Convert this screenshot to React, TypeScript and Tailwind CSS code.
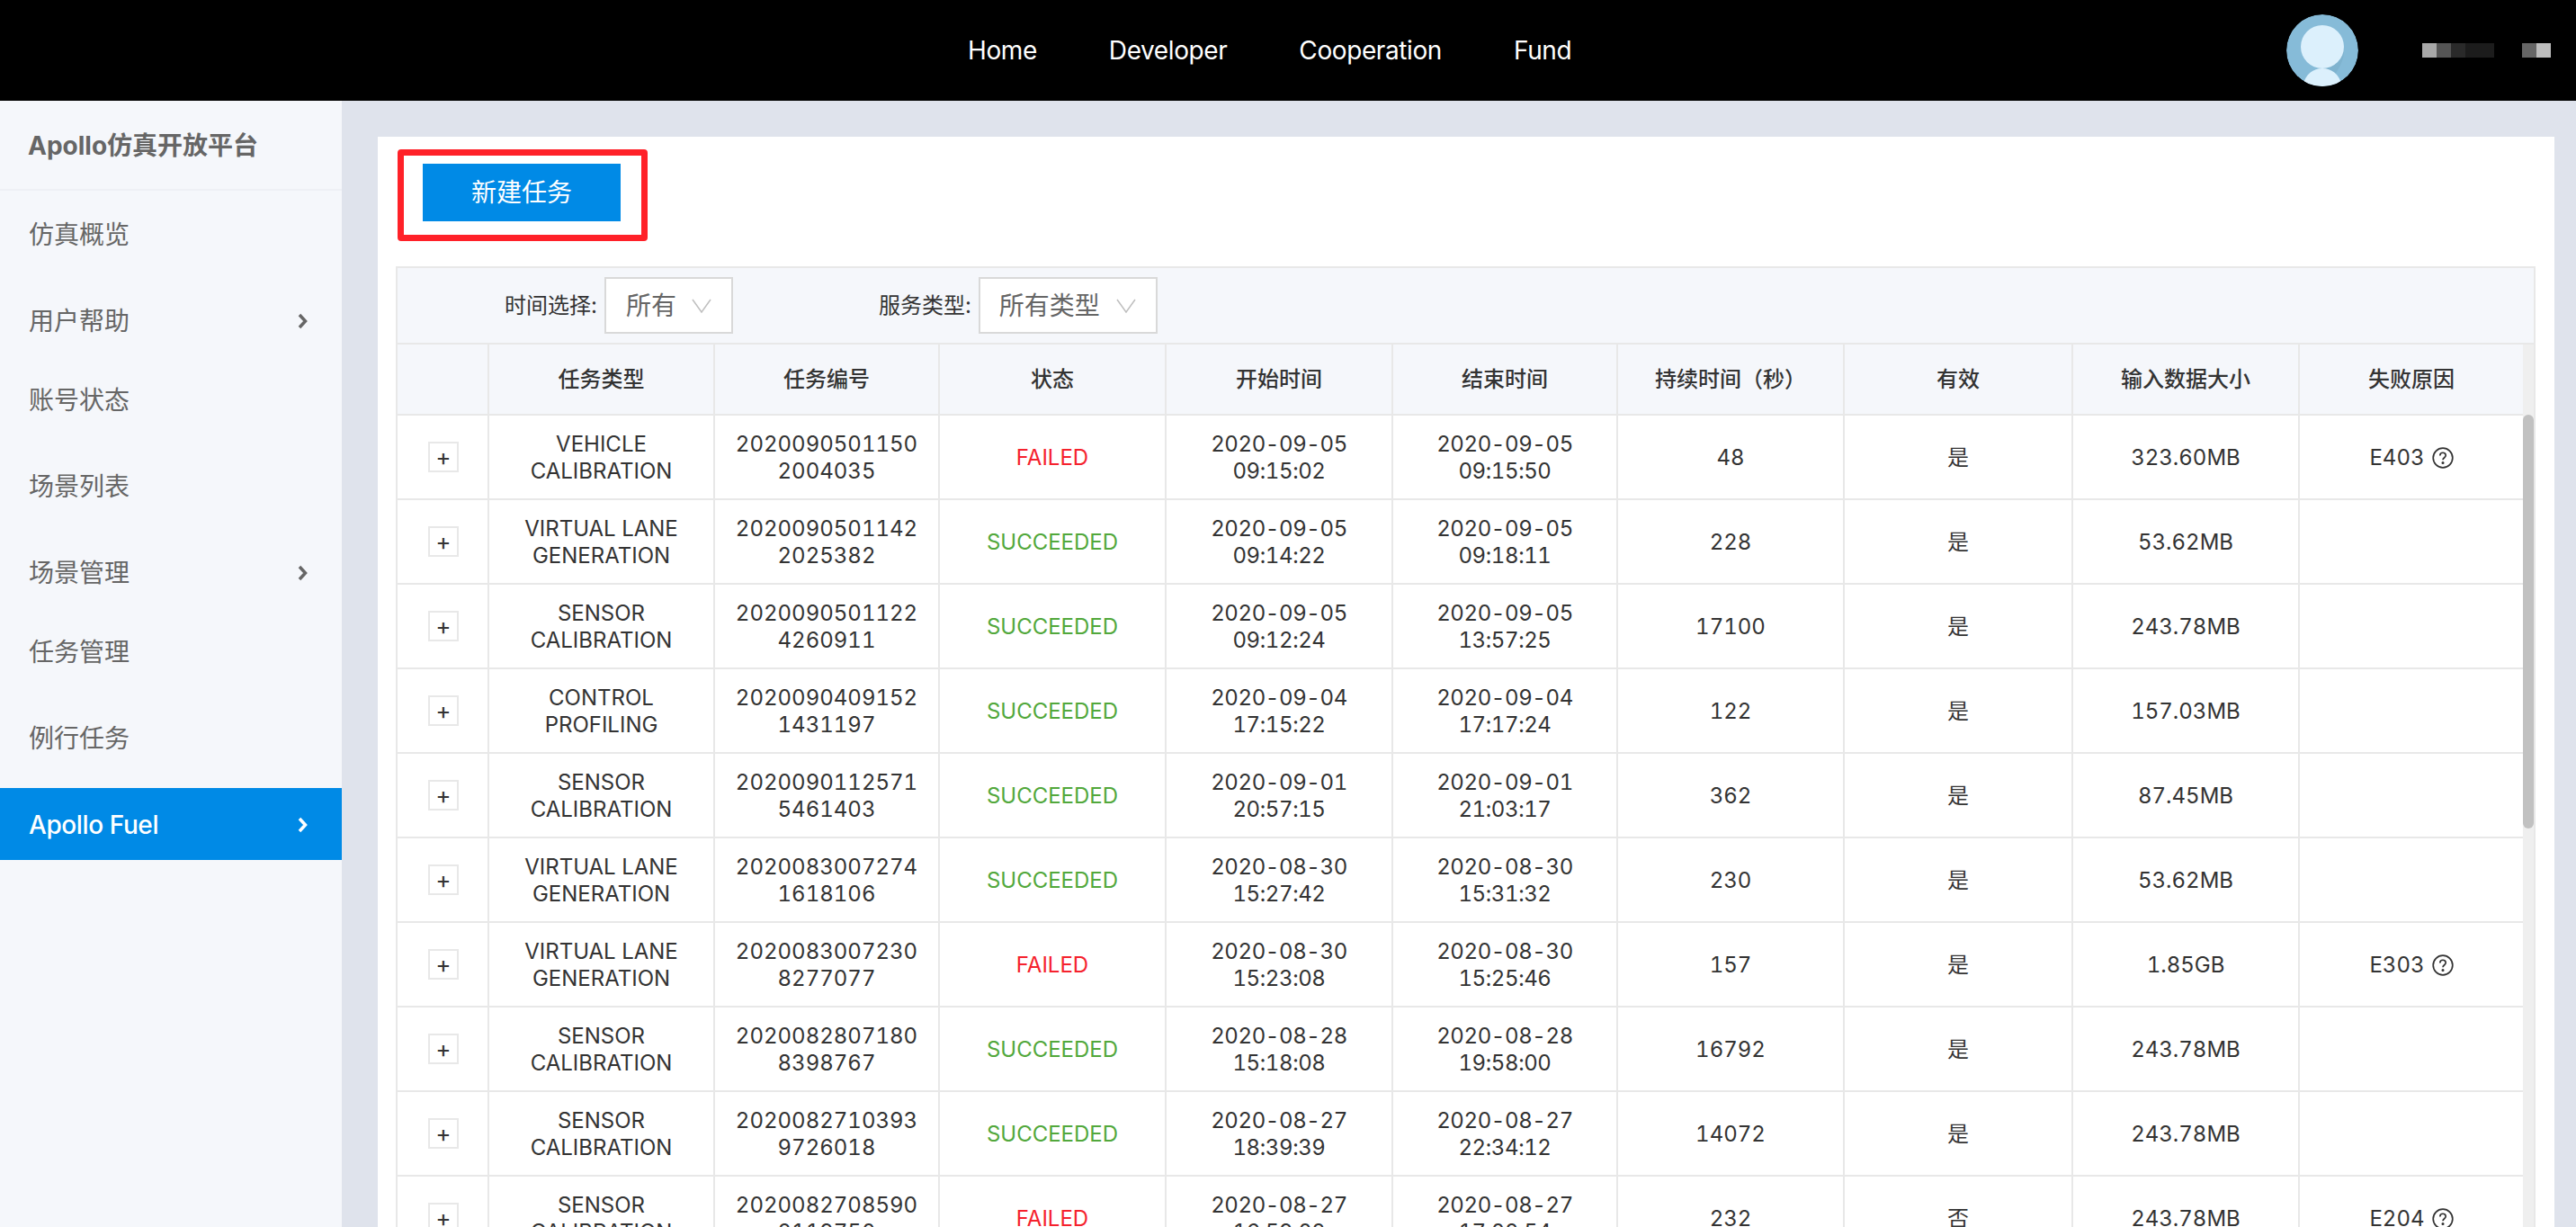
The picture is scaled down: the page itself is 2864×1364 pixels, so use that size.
import React from "react";

const font = { fontFamily: 'Inter, "Noto Sans CJK SC", sans-serif' };

const Chevron = ({ color }: { color: string }) => (
  <svg width="12" height="18" viewBox="0 0 12 18" fill="none" stroke={color} strokeWidth="3.500">
    <path d="M3 2l6.500 7-6.500 7" />
  </svg>
);

const Caret = () => (
  <svg width="22" height="16" viewBox="0 0 22 16" fill="none" stroke="#bfbfbf" strokeWidth="1.500">
    <path d="M1 1l10 14 10-14" />
  </svg>
);

const Help = () => (
  <svg width="24" height="24" viewBox="0 0 24 24" fill="none" stroke="#333" strokeWidth="1.700" className="inline-block align-[-4px] ml-2">
    <circle cx="12" cy="12" r="10.800" />
    <path d="M8.800 9.500c0-4.300 6.400-4.300 6.400-.2 0 2.400-3.200 2.500-3.200 5" />
    <circle cx="12" cy="17.500" r="0.700" fill="#333" />
  </svg>
);

const navItems = ["Home", "Developer", "Cooperation", "Fund"];

const sideItems = [
  { label: "仿真概览", mt: "mt-2" },
  { label: "用户帮助", mt: "mt-4", arrow: true },
  { label: "账号状态", mt: "mt-2" },
  { label: "场景列表", mt: "mt-4" },
  { label: "场景管理", mt: "mt-4", arrow: true },
  { label: "任务管理", mt: "mt-2" },
  { label: "例行任务", mt: "mt-4" },
  { label: "Apollo Fuel", mt: "mt-4", arrow: true, active: true },
];

const rows = [
  ["VEHICLE CALIBRATION", "2020090501150 2004035", "FAILED", "2020-09-05 09:15:02", "2020-09-05 09:15:50", "48", "是", "323.60MB", "E403"],
  ["VIRTUAL LANE GENERATION", "2020090501142 2025382", "SUCCEEDED", "2020-09-05 09:14:22", "2020-09-05 09:18:11", "228", "是", "53.62MB", ""],
  ["SENSOR CALIBRATION", "2020090501122 4260911", "SUCCEEDED", "2020-09-05 09:12:24", "2020-09-05 13:57:25", "17100", "是", "243.78MB", ""],
  ["CONTROL PROFILING", "2020090409152 1431197", "SUCCEEDED", "2020-09-04 17:15:22", "2020-09-04 17:17:24", "122", "是", "157.03MB", ""],
  ["SENSOR CALIBRATION", "2020090112571 5461403", "SUCCEEDED", "2020-09-01 20:57:15", "2020-09-01 21:03:17", "362", "是", "87.45MB", ""],
  ["VIRTUAL LANE GENERATION", "2020083007274 1618106", "SUCCEEDED", "2020-08-30 15:27:42", "2020-08-30 15:31:32", "230", "是", "53.62MB", ""],
  ["VIRTUAL LANE GENERATION", "2020083007230 8277077", "FAILED", "2020-08-30 15:23:08", "2020-08-30 15:25:46", "157", "是", "1.85GB", "E303"],
  ["SENSOR CALIBRATION", "2020082807180 8398767", "SUCCEEDED", "2020-08-28 15:18:08", "2020-08-28 19:58:00", "16792", "是", "243.78MB", ""],
  ["SENSOR CALIBRATION", "2020082710393 9726018", "SUCCEEDED", "2020-08-27 18:39:39", "2020-08-27 22:34:12", "14072", "是", "243.78MB", ""],
  ["SENSOR CALIBRATION", "2020082708590 2119750", "FAILED", "2020-08-27 16:59:02", "2020-08-27 17:02:54", "232", "否", "243.78MB", "E204"],
];

const headers = ["任务类型", "任务编号", "状态", "开始时间", "结束时间", "持续时间（秒）", "有效", "输入数据大小", "失败原因"];
const widths = ["w-[251px]", "w-[250px]", "w-[252px]", "w-[252px]", "w-[250px]", "w-[252px]", "w-[254px]", "w-[252px]", "w-auto"];
const cell = "border-b-2 border-l-2 border-[#e8e8e8] pt-[2px]";

export default function App() {
  return (
    <div className="h-[1364px] overflow-hidden flex flex-col bg-[#dfe3ec] text-[#333]" style={font}>
      <header className="h-[112px] shrink-0 bg-black flex items-center text-white">
        <nav className="ml-[1076px] flex gap-[80px] text-[28px] tracking-[-0.4px]">
          {navItems.map((n) => (
            <span key={n}>{n}</span>
          ))}
        </nav>
        <div className="ml-auto w-[80px] h-[80px] rounded-full overflow-hidden shrink-0">
          <svg viewBox="0 0 80 80" width="80" height="80">
            <circle cx="40" cy="40" r="40" fill="#86bbd8" />
            <path d="M40 16a24 24 0 0 1 24 24c0 12-6 20-8 24l-16 16z" fill="#7fb3cf" />
            <circle cx="40" cy="36" r="24" fill="#dcf0fc" />
            <path d="M18 80c3-14 12-20 22-20s19 6 22 20z" fill="#dcf0fc" />
          </svg>
        </div>
        <div className="ml-[71px] flex h-[16px]">
          <div className="w-[16px] bg-[#a8a8a8]" />
          <div className="w-[16px] bg-[#555]" />
          <div className="w-[16px] bg-[#2a2a2a]" />
          <div className="w-[32px] bg-[#1c1c1c]" />
        </div>
        <div className="ml-[31px] mr-[28px] flex h-[16px]">
          <div className="w-[16px] bg-[#666]" />
          <div className="w-[16px] bg-[#bdbdbd]" />
        </div>
      </header>
      <div className="flex flex-1 min-h-0">
        <aside className="w-[380px] shrink-0 bg-[#f5f7fb] text-[#666] text-[28px]">
          <div className="h-[100px] flex items-center pl-[31px] pt-[2px] font-bold border-b-2 border-[#eef0f5]">Apollo仿真开放平台</div>
          {sideItems.map((s) => (
            <div
              key={s.label}
              className={`${s.mt} h-[80px] flex items-center justify-between pl-[32px] pr-[38px] pt-[1px] ${s.active ? "bg-[#008ae6] text-white font-medium tracking-[-0.4px]" : ""}`}
            >
              <span>{s.label}</span>
              {s.arrow && <Chevron color={s.active ? "#fff" : "#666"} />}
            </div>
          ))}
        </aside>
        <main className="flex-1 min-w-0 pt-[40px] pl-[40px] pr-[24px]">
          <div className="bg-white h-full pl-[20px] pr-[21px] pt-[14px]">
            <div className="w-[278px] h-[102px] ml-[2px] border-[7px] border-[#ff2128] rounded-[4px] pl-[21px] pt-[9px]">
              <button className="block w-[220px] h-[64px] bg-[#008ae6] text-white text-[28px]">新建任务</button>
            </div>
            <div className="mt-[28px] border-2 border-[#e8e8e8] border-b-0 relative">
              <div className="h-[85px] bg-[#f5f7fb] border-b-2 border-[#e8e8e8] flex items-center text-[24px]">
                <span className="ml-[119px]">时间选择:</span>
                <div className="ml-[8px] w-[143px] h-[63px] bg-white border-2 border-[#d9d9d9] flex items-center justify-between pl-[22px] pr-[22px] text-[28px] text-[#666]">
                  <span>所有</span>
                  <Caret />
                </div>
                <span className="ml-[162px]">服务类型:</span>
                <div className="ml-[8px] w-[199px] h-[63px] bg-white border-2 border-[#d9d9d9] flex items-center justify-between pl-[21px] pr-[22px] text-[28px] text-[#666]">
                  <span>所有类型</span>
                  <Caret />
                </div>
              </div>
              <div className="mr-[12px]">
                <table className="w-full table-fixed border-collapse text-[24px] leading-[30px] text-center tabular-nums">
                  <colgroup>
                    <col className="w-[101px]" />
                    {widths.map((w, i) => (
                      <col key={i} className={w} />
                    ))}
                  </colgroup>
                  <thead>
                    <tr className="h-[78px] bg-[#f5f7fb]">
                      <th className="border-b-2 border-[#e8e8e8] font-medium" />
                      {headers.map((h) => (
                        <th key={h} className="border-b-2 border-l-2 border-[#e8e8e8] font-medium">
                          {h}
                        </th>
                      ))}
                    </tr>
                  </thead>
                  <tbody>
                    {rows.map((r) => (
                      <tr key={r[1]} className="h-[94px]">
                        <td className="border-b-2 border-[#e8e8e8] pl-[34px] text-left">
                          <span className="w-[34px] h-[34px] border-2 border-[#e8e8e8] flex items-center justify-center text-[26px] leading-none">+</span>
                        </td>
                        <td className={`${cell} px-[30px]`}>{r[0]}</td>
                        <td className={`${cell} px-[22px]`}>{r[1]}</td>
                        <td className={`${cell} ${r[2] === "FAILED" ? "text-[#f5222d]" : "text-[#52a83c]"}`}>{r[2]}</td>
                        <td className={`${cell} px-[40px] tracking-[-0.4px]`}>{r[3]}</td>
                        <td className={`${cell} px-[40px] tracking-[-0.4px]`}>{r[4]}</td>
                        <td className={cell}>{r[5]}</td>
                        <td className={cell}>{r[6]}</td>
                        <td className={cell}>{r[7]}</td>
                        <td className={cell}>
                          {r[8] && (
                            <>
                              {r[8]}
                              <Help />
                            </>
                          )}
                        </td>
                      </tr>
                    ))}
                  </tbody>
                </table>
              </div>
              <div className="absolute right-0 top-[85px] w-[12px] h-[1000px] bg-[#efefef]">
                <div className="mt-[78px] h-[460px] rounded-full bg-[#c1c1c1]" />
              </div>
            </div>
          </div>
        </main>
      </div>
    </div>
  );
}
